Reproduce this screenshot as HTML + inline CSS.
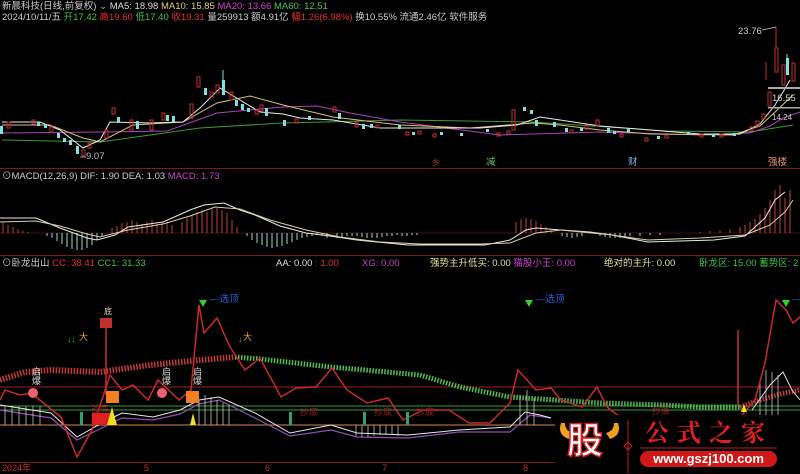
<!DOCTYPE html>
<html><head><meta charset="utf-8"><style>
html,body{margin:0;padding:0;background:#000;width:800px;height:473px;overflow:hidden}
.t{position:absolute;font-family:"Liberation Sans","Noto Sans CJK SC",sans-serif;font-size:9.5px;white-space:nowrap;line-height:11px}
</style></head><body>
<svg width="800" height="473" style="position:absolute;left:0;top:0" xmlns="http://www.w3.org/2000/svg">
<rect width="800" height="473" fill="#000"/>
<!-- dividers -->
<line x1="0" y1="168.5" x2="800" y2="168.5" stroke="#7a1a1a" stroke-width="1"/>
<line x1="0" y1="255.5" x2="800" y2="255.5" stroke="#7a1a1a" stroke-width="1"/>
<line x1="0" y1="462.5" x2="800" y2="462.5" stroke="#7a1a1a" stroke-width="1"/>
<!-- main MAs -->
<polyline fill="none" stroke="#3c9a3c" stroke-width="1" points="2,140 100,142 200,128 283,123 400,120 533,122 667,131 750,132 793,125"/>
<polyline fill="none" stroke="#b040c0" stroke-width="1" points="2,133 100,132 167,131 217,113 283,107 317,106 350,113 400,122 500,135 600,132 700,135 750,133 770,126 783,118 800,112"/>
<polyline fill="none" stroke="#d8c070" stroke-width="1" points="2,125 50,125 83,138 100,142 133,125 183,122 217,103 250,96 283,105 333,117 400,125 470,128 533,123 560,125 600,130 650,134 733,135 760,126 775,112 793,95"/>
<polyline fill="none" stroke="#e8e8e8" stroke-width="1" points="2,122 40,122 60,130 83,148 100,140 110,122 150,123 183,122 200,108 220,88 240,100 260,112 283,114 300,118 333,120 380,128 430,128 480,128 517,125 540,117 560,120 600,126 650,130 700,134 740,134 760,124 775,105 783,92 790,80"/>
<!-- candles -->
<g stroke-width="1">
<g fill="none" stroke="#c03030">
<rect x="7" y="122" width="3" height="6"/><rect x="32" y="120" width="3" height="4"/><rect x="50" y="126" width="3" height="6"/><rect x="82" y="150" width="3" height="6"/><rect x="88" y="143" width="3" height="5"/><rect x="105" y="130" width="3" height="8"/><rect x="112" y="108" width="3" height="6"/><rect x="130" y="120" width="3" height="10"/><rect x="150" y="120" width="3" height="10"/><rect x="162" y="113" width="3" height="7"/><rect x="190" y="104" width="3" height="14"/><rect x="197" y="77" width="3" height="10"/><rect x="210" y="92" width="3" height="5"/><rect x="216" y="85" width="3" height="8"/><rect x="230" y="92" width="3" height="8"/><rect x="255" y="110" width="3" height="4"/><rect x="260" y="105" width="3" height="6"/><rect x="295" y="119" width="3" height="4"/><rect x="333" y="107" width="3" height="5"/><rect x="355" y="122" width="3" height="5"/><rect x="376" y="125" width="3" height="3"/><rect x="406" y="132" width="3" height="3"/><rect x="418" y="131" width="3" height="3"/><rect x="433" y="134" width="3" height="3"/><rect x="497" y="133" width="3" height="3"/><rect x="507" y="131" width="3" height="3"/><rect x="512" y="110" width="3" height="20"/><rect x="570" y="130" width="3" height="3"/><rect x="585" y="125" width="3" height="4"/><rect x="596" y="120" width="3" height="6"/><rect x="620" y="134" width="3" height="3"/><rect x="645" y="138" width="3" height="3"/><rect x="665" y="135" width="3" height="3"/><rect x="700" y="134" width="3" height="3"/><rect x="720" y="134" width="3" height="3"/><rect x="750" y="127" width="3" height="4"/><rect x="756" y="121" width="3" height="5"/><rect x="762" y="114" width="3" height="5"/><rect x="768" y="92" width="3" height="14"/><rect x="775" y="48" width="3" height="24"/><rect x="782" y="65" width="3" height="20"/><rect x="792" y="63" width="3" height="18"/>
</g>
<g fill="#7fe0e0">
<rect x="0" y="126" width="3" height="8"/><rect x="37" y="122" width="3" height="4"/><rect x="44" y="124" width="3" height="4"/><rect x="57" y="133" width="3" height="5"/><rect x="63" y="138" width="3" height="4"/><rect x="69" y="140" width="3" height="5"/><rect x="76" y="146" width="3" height="8"/><rect x="117" y="117" width="3" height="6"/><rect x="136" y="121" width="3" height="8"/><rect x="166" y="115" width="3" height="6"/><rect x="172" y="116" width="3" height="6"/><rect x="204" y="88" width="3" height="7"/><rect x="222" y="80" width="3" height="15"/><rect x="235" y="100" width="3" height="6"/><rect x="241" y="104" width="3" height="6"/><rect x="247" y="108" width="3" height="4"/><rect x="265" y="108" width="3" height="8"/><rect x="283" y="120" width="3" height="6"/><rect x="308" y="116" width="3" height="4"/><rect x="338" y="113" width="3" height="6"/><rect x="362" y="124" width="3" height="5"/><rect x="370" y="124" width="3" height="4"/><rect x="398" y="125" width="3" height="4"/><rect x="412" y="132" width="3" height="3"/><rect x="440" y="132" width="3" height="3"/><rect x="460" y="133" width="3" height="3"/><rect x="486" y="129" width="3" height="3"/><rect x="523" y="107" width="3" height="4"/><rect x="530" y="110" width="3" height="4"/><rect x="535" y="120" width="3" height="6"/><rect x="553" y="122" width="3" height="5"/><rect x="565" y="128" width="3" height="4"/><rect x="580" y="128" width="3" height="3"/><rect x="607" y="128" width="3" height="5"/><rect x="613" y="131" width="3" height="3"/><rect x="627" y="129" width="3" height="3"/><rect x="657" y="136" width="3" height="3"/><rect x="687" y="132" width="3" height="3"/><rect x="712" y="134" width="3" height="3"/><rect x="733" y="133" width="3" height="3"/><rect x="786" y="58" width="3" height="17"/>
</g>
<g stroke="#c03030"><line x1="776" y1="27" x2="776" y2="48"/><line x1="766" y1="62" x2="766" y2="80"/></g>
<g stroke="#7fe0e0"><line x1="223" y1="70" x2="223" y2="95"/><line x1="787" y1="54" x2="787" y2="60"/></g>
</g>
<rect x="768" y="87" width="32" height="2" fill="#aaa"/><rect x="768" y="107" width="32" height="1.5" fill="#aaa"/>
<line x1="762" y1="30" x2="776" y2="27" stroke="#ccc" stroke-width="0.7"/>
<line x1="80" y1="157" x2="86" y2="157" stroke="#ccc" stroke-width="0.7"/>
<!-- MACD -->
<line x1="0" y1="233" x2="800" y2="233" stroke="#802020" stroke-width="0.6"/>
<g stroke="#c04040" stroke-width="1">
<path d="M3,233V222M8,233V225M13,233V227M18,233V229M23,233V231M28,233V232M112,233V228M117,233V226M122,233V223M127,233V222M132,233V220M137,233V222M142,233V224M147,233V222M152,233V220M157,233V224M162,233V222M167,233V223M172,233V225M182,233V222M187,233V218M192,233V215M197,233V212M202,233V210M207,233V212M212,233V209M217,233V208M222,233V210M227,233V213M232,233V220M237,233V227M516,233V222M521,233V219M526,233V218M531,233V219M536,233V221M541,233V224M546,233V227M551,233V230M700,233V232M710,233V231M720,233V230M730,233V229M740,233V227M745,233V225M750,233V222M755,233V219M760,233V214M765,233V208M770,233V200M775,233V190M780,233V185M785,233V198M790,233V190"/>
</g>
<g stroke="#9ad8d8" stroke-width="1">
<path d="M47,233V236M52,233V238M57,233V241M62,233V244M67,233V247M72,233V249M77,233V250M82,233V250M87,233V248M92,233V245M97,233V240M102,233V236M247,233V236M252,233V240M257,233V243M262,233V245M267,233V247M272,233V248M277,233V247M282,233V246M287,233V244M292,233V242M297,233V240M302,233V238M307,233V237M312,233V236M317,233V235M322,233V236M327,233V238M337,233V238M342,233V237M347,233V236M352,233V236M357,233V236M362,233V237M367,233V238M372,233V238M377,233V238M382,233V237M387,233V236M392,233V236M397,233V235M402,233V236M407,233V236M412,233V235M417,233V235M562,233V236M567,233V237M572,233V238M577,233V237M582,233V236M600,233V236M605,233V237M610,233V238M615,233V238M620,233V238M625,233V237M630,233V236M640,233V236M650,233V235M660,233V235"/>
</g>
<polyline fill="none" stroke="#e8e8e8" stroke-width="1" points="0,218 36,218 60,228 87,238 97,240 115,235 128,227 163,222 190,210 204,205 224,203 240,210 255,215 280,226 306,233 330,236 357,240 408,245 485,245 510,240 526,230 536,228 561,230 590,232 612,235 648,242 680,241 714,240 745,236 765,218 775,200 785,192"/>
<polyline fill="none" stroke="#d8d0a0" stroke-width="1" points="0,222 36,221 60,226 87,234 100,237 128,230 163,224 190,216 215,207 240,209 270,220 306,230 340,237 380,242 420,244 480,244 510,243 536,233 561,230 612,235 648,240 700,238 745,235 770,225 785,212 793,200"/>
<!-- Pane 3 -->
<line x1="0" y1="387" x2="800" y2="387" stroke="#7a1a1a" stroke-width="1.2"/>
<line x1="0" y1="406" x2="800" y2="406" stroke="#3a9a3a" stroke-width="1"/>
<line x1="0" y1="410" x2="800" y2="410" stroke="#3a9a3a" stroke-width="1"/>
<line x1="0" y1="425" x2="800" y2="425" stroke="#b06a3a" stroke-width="1.2"/>
<!-- ribbon -->
<polyline fill="none" stroke="#c03a3a" stroke-width="6" stroke-dasharray="1.5 1.5" points="0,380 25,372 51,370 75,371 100,372 150,365 200,360 235,357"/>
<polyline fill="none" stroke="#50c050" stroke-width="5" stroke-dasharray="1.5 1.5" points="235,357 260,359 331,367 420,375 460,387 510,397 600,403 663,405 700,407 740,407"/>
<polyline fill="none" stroke="#c03a3a" stroke-width="5" stroke-dasharray="1.5 1.5" points="740,407 760,400 780,394 800,390"/>
<!-- white/purple lines -->
<polyline fill="none" stroke="#9050b0" stroke-width="1.2" points="0,410 51,418 77,440 102,428 122,418 153,420 180,414 199,404 219,400 255,418 290,436 331,430 357,437 408,438 459,432 510,432 530,415 551,418"/>
<polyline fill="none" stroke="#e8e8e8" stroke-width="1" points="0,405 51,413 77,437 102,423 122,413 153,417 180,410 199,400 219,397 255,413 290,433 331,425 357,433 408,435 459,430 510,427 525,412 540,415 551,418"/>
<!-- vertical white hatch -->
<g stroke="#ddd" stroke-width="0.7"><path d="M5,406V425M12,406V425M19,406V425M26,406V425M33,406V425M40,406V425M199,400V425M205,395V425M211,397V425M217,400V425M223,403V425M229,405V425M356,425V436M362,425V437M368,425V437M374,425V436M380,425V435M386,425V435M392,425V435M398,425V436M520,395V425M527,390V425M534,398V425M760,380V425M766,370V425M772,372V425M778,375V425"/></g>
<polyline fill="none" stroke="#ddd" points="752,410 770,385 783,372 792,390 800,400"/>
<!-- CC red line -->
<polyline fill="none" stroke="#c82a2a" stroke-width="1.5" points="0,400 5,390 20,395 31,393 46,405 61,417 77,457 92,430 110,375 122,390 133,385 148,400 158,380 179,400 191,390 199,305 204,333 217,318 230,347 245,370 260,358 281,397 296,388 316,387 332,368 347,390 367,403 388,398 403,420 423,410 449,410 469,423 490,423 510,403 518,370 536,390 551,388 561,400 582,407 597,387 607,407 628,423 663,423 735,423 755,400 765,363 776,300 786,310 793,323 800,317"/>
<!-- tall bars -->
<line x1="106" y1="320" x2="106" y2="395" stroke="#c03030" stroke-width="1.5"/>
<line x1="738" y1="330" x2="738" y2="405" stroke="#c03030" stroke-width="1.5"/>
<rect x="100" y="318" width="12" height="10" fill="#c03030"/>
<!-- green small bars -->
<g fill="#30a070"><rect x="80" y="412" width="3" height="13"/><rect x="289" y="412" width="3" height="13"/><rect x="363" y="412" width="3" height="13"/><rect x="406" y="412" width="3" height="13"/></g>
<!-- orange squares, red block -->
<rect x="106" y="391" width="13" height="12" fill="#f08020"/><rect x="186" y="391" width="13" height="12" fill="#f08020"/>
<rect x="92" y="413" width="20" height="12" fill="#e02020"/>
<path d="M107,425 L112,407 L117,425Z" fill="#f0e020"/><path d="M190,425 L193,413 L196,425Z" fill="#f0e020"/>
<path d="M741,412 L744,404 L747,412Z" fill="#f0e020"/>
<circle cx="33" cy="393" r="5" fill="#f06070"/><circle cx="162" cy="393" r="5" fill="#f06070"/>
<!-- green triangles -->
<g fill="#30d030"><path d="M199,300h8l-4,7z"/><path d="M525,300h8l-4,7z"/><path d="M782,300h8l-4,7z"/></g>
<g fill="#30c030" font-size="9"><text x="67" y="342">↓↓</text><text x="238" y="342">↓</text></g>
</svg>
<div class="t" style="left:2px;top:1px;color:#ccc">新晨科技(日线,前复权) <span style="color:#aaa">⌄</span> <span style="color:#ddd">MA5: 18.98</span> <span style="color:#e0d070">MA10: 15.85</span> <span style="color:#d040d0">MA20: 13.66</span> <span style="color:#50c050">MA60: 12.51</span></div>
<div class="t" style="left:2px;top:12px;color:#ccc">2024/10/11/五 <span style="color:#40c040">开17.42</span> <span style="color:#e03030">高19.60</span> <span style="color:#40c040">低17.40</span> <span style="color:#e03030">收19.31</span> <span style="color:#ccc">量259913 额4.91亿</span> <span style="color:#e03030">幅1.26(6.98%)</span> 换10.55% 流通2.46亿 软件服务</div>
<div class="t" style="left:86px;top:151px;color:#bbb">9.07</div>
<div class="t" style="left:738px;top:26px;color:#ccc">23.76</div>
<div class="t" style="left:772px;top:93px;color:#ccc">16.55</div>
<div class="t" style="left:772px;top:112px;color:#ccc;font-size:8px">14.24</div>
<div class="t" style="left:432px;top:157px;color:#c03030;font-size:8px">乡</div>
<div class="t" style="left:486px;top:157px;color:#60c060">减</div>
<div class="t" style="left:628px;top:157px;color:#80b0e0">财</div>
<div class="t" style="left:768px;top:157px;color:#e09070">强楼</div>
<div class="t" style="left:2px;top:171px;color:#ccc">⊙MACD(12,26,9) DIF: 1.90 DEA: 1.03 <span style="color:#d040d0">MACD: 1.73</span></div>
<div class="t" style="left:2px;top:258px;color:#ccc">⊙卧龙出山 <span style="color:#e03030">CC: 38.41</span> <span style="color:#40c040">CC1: 31.33</span></div>
<div class="t" style="left:276px;top:258px;color:#ddd">AA: 0.00 <span style="color:#e03030">: 1.00</span></div>
<div class="t" style="left:362px;top:258px;color:#c040c0">XG: 0.00</div>
<div class="t" style="left:430px;top:258px;color:#e0e0a0">强势主升低买: 0.00 <span style="color:#d040d0">猫股小王: 0.00</span></div>
<div class="t" style="left:604px;top:258px;color:#e0e0a0">绝对的主升: 0.00</div>
<div class="t" style="left:699px;top:258px;color:#40c040">卧龙区: 15.00 蓄势区: 2</div>
<div class="t" style="left:210px;top:294px;color:#3060e0">—选顶</div>
<div class="t" style="left:536px;top:294px;color:#3060e0">—选顶</div>
<div class="t" style="left:792px;top:294px;color:#3060e0">—</div>
<div class="t" style="left:104px;top:306px;color:#ddd;font-size:8px">底</div>
<div class="t" style="left:79px;top:332px;color:#f0a040;font-size:9px">大</div>
<div class="t" style="left:243px;top:332px;color:#f0a040;font-size:9px">大</div>
<div class="t" style="left:32px;top:368px;color:#ddd;width:9px;white-space:normal;font-size:9px;line-height:9px">启爆</div>
<div class="t" style="left:162px;top:368px;color:#ddd;width:9px;white-space:normal;font-size:9px;line-height:9px">启爆</div>
<div class="t" style="left:193px;top:368px;color:#ddd;width:9px;white-space:normal;font-size:9px;line-height:9px">启爆</div>
<div class="t" style="left:300px;top:407px;color:#a02020;font-size:9px">抄底</div>
<div class="t" style="left:374px;top:407px;color:#a02020;font-size:9px">抄底</div>
<div class="t" style="left:416px;top:407px;color:#a02020;font-size:9px">抄底</div>
<div class="t" style="left:91px;top:404px;color:#a02020;font-size:9px">抄底</div>
<div class="t" style="left:652px;top:406px;color:#a02020;font-size:9px">抄底</div>
<div class="t" style="left:2px;top:463px;color:#c03030;font-size:9px">2024年</div>
<div class="t" style="left:144px;top:463px;color:#c03030;font-size:9px">5</div>
<div class="t" style="left:265px;top:463px;color:#c03030;font-size:9px">6</div>
<div class="t" style="left:382px;top:463px;color:#c03030;font-size:9px">7</div>
<div class="t" style="left:523px;top:463px;color:#c03030;font-size:9px">8</div>
<!-- logo -->
<div style="position:absolute;left:555px;top:415px;width:245px;height:58px;background:#000">
<svg width="245" height="58" style="position:absolute;left:0;top:0">
<path d="M6,8 Q2,20 14,24 L18,18 Q10,16 10,8Z" fill="#f0a020"/>
<path d="M63,8 Q67,20 55,24 L51,18 Q59,16 59,8Z" fill="#f0a020"/>
<line x1="73" y1="5" x2="73" y2="58" stroke="#c02020"/>
<path d="M73,27 l4,4 -4,4 -4,-4z" fill="none" stroke="#c02020"/>
<rect x="85" y="36" width="137" height="16" rx="8" fill="#d01818"/>
<line x1="85" y1="33" x2="222" y2="33" stroke="#c02020"/>
</svg>
<div style="position:absolute;left:12px;top:3px;font:bold 36px 'Noto Sans CJK SC',sans-serif;color:#fff;-webkit-text-stroke:1.5px #d02020;line-height:40px">股</div>
<div style="position:absolute;left:90px;top:2px;font:bold 24px 'Noto Serif CJK SC',serif;color:#e02020;letter-spacing:8px;line-height:28px">公式之家</div>
<div style="position:absolute;left:85px;top:36px;width:137px;text-align:center;font:bold 13px 'Liberation Sans',sans-serif;color:#fff;line-height:16px">www.gszj100.com</div>
</div>
</body></html>
